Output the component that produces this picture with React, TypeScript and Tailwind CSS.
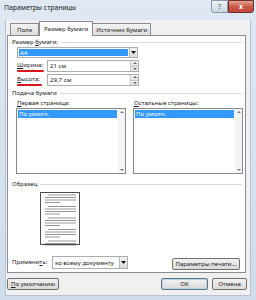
import React from "react";

const U = ({ c }: { c: string }) => <span className="underline underline-offset-1">{c}</span>;

function SectionHeader({ children }: { children: React.ReactNode }) {
  return (
    <div className="flex items-center h-[8px] pl-[4px] pr-[3px]">
      <span className="leading-[8px] whitespace-nowrap">{children}</span>
      <div className="flex-1 h-px bg-[#dcdcdc] ml-[3px]" />
    </div>
  );
}

function DropArrow() {
  return (
    <div className="w-[8px] h-full border-l border-[#b5b5b5] bg-gradient-to-b from-[#f4f4f4] to-[#dcdcdc] flex items-center justify-center">
      <svg width="5" height="3" viewBox="0 0 5 3"><path d="M0 0H5L2.5 3Z" fill="#111" /></svg>
    </div>
  );
}

function Spin() {
  return (
    <div className="w-[8px] h-full flex flex-col border-l border-[#c8c8c8]">
      <div className="flex-1 bg-gradient-to-b from-[#f6f6f6] to-[#e2e2e2] border-b border-[#c8c8c8] flex items-center justify-center">
        <svg width="4" height="2" viewBox="0 0 4 2"><path d="M0 2H4L2 0Z" fill="#666" /></svg>
      </div>
      <div className="flex-1 bg-gradient-to-b from-[#f6f6f6] to-[#e2e2e2] flex items-center justify-center">
        <svg width="4" height="2" viewBox="0 0 4 2"><path d="M0 0H4L2 2Z" fill="#666" /></svg>
      </div>
    </div>
  );
}

function SizeRow({ label, ul, value }: { label: React.ReactNode; ul: number; value: string }) {
  return (
    <div className="flex h-[12px] pl-[9px]">
      <div className="w-[30px] flex flex-col">
        <span className="leading-[10px] h-[11px] whitespace-nowrap">{label}</span>
        <div className="h-[2px] bg-[#d81818] rounded-full" style={{ width: ul }} />
      </div>
      <div className="w-[92px] h-[12px] flex border border-[#abadb3] bg-white">
        <span className="flex-1 pl-[2px] leading-[10px]">{value}</span>
        <Spin />
      </div>
    </div>
  );
}

function ListBox({ item }: { item: string }) {
  return (
    <div className="w-[110px] h-[66px] border border-[#828790] bg-white flex">
      <div className="flex-1 p-px">
        <div className="bg-[#3399ff] text-white h-[8px] leading-[8px] pl-px">{item}</div>
      </div>
      <div className="w-[7px] bg-[#f4f4f4] flex flex-col justify-between items-center py-[2px]">
        <svg width="4" height="2" viewBox="0 0 4 2"><path d="M0 2H4L2 0Z" fill="#777" /></svg>
        <svg width="4" height="2" viewBox="0 0 4 2"><path d="M0 0H4L2 2Z" fill="#777" /></svg>
      </div>
    </div>
  );
}

function Preview() {
  const lines: React.ReactNode[] = [];
  let y = 3;
  for (let p = 0; p < 5; p++) {
    const ys = [y, y + 2.5, y + 5, y + 7.5];
    lines.push(<line key={`a${p}`} x1={8} x2={36} y1={ys[0]} y2={ys[0]} />);
    lines.push(<line key={`b${p}`} x1={5} x2={36} y1={ys[1]} y2={ys[1]} />);
    lines.push(<line key={`c${p}`} x1={5} x2={36} y1={ys[2]} y2={ys[2]} />);
    if (ys[3] < 50) lines.push(<line key={`d${p}`} x1={5} x2={20} y1={ys[3]} y2={ys[3]} />);
    y += 11.5;
  }
  return (
    <svg width="41" height="54" viewBox="0 0 41 54">
      <rect x="0.5" y="0.5" width="39" height="52" fill="#fff" stroke="#4d4d4d" />
      <g stroke="#8a8a8a" strokeWidth="0.9">{lines}</g>
    </svg>
  );
}

function Btn({ children, w, extra = "" }: { children: React.ReactNode; w: string; extra?: string }) {
  return (
    <div className={`${w} h-[12px] rounded-[2px] border border-[#707070] bg-gradient-to-b from-[#f2f2f2] to-[#d9d9d9] flex items-center justify-center leading-[10px] whitespace-nowrap ${extra}`}>
      {children}
    </div>
  );
}

export default function App() {
  return (
    <div className="w-[256px] h-[300px] overflow-hidden bg-gradient-to-b from-[#dfe8f3] to-[#cfdcea] flex flex-col text-[6.1px] text-[#1a1a1a] font-['Noto_Sans',sans-serif]">
      {/* Title bar */}
      <div className="h-[20px] flex items-start shrink-0">
        <span className="pl-[4px] pt-[4px] leading-[8px] text-[#1a1a1a] text-[6.8px]">Параметры страницы</span>
        <div className="ml-auto mr-[2px] flex">
          <div className="w-[17px] h-[13px] border border-[#8a97a8] rounded-bl-[3px] bg-gradient-to-b from-[#eef3f8] to-[#ccd7e3] flex items-center justify-center text-[7px] text-[#555] leading-none">?</div>
          <div className="w-[26px] h-[13px] border border-[#6d2f2f] rounded-br-[3px] bg-gradient-to-b from-[#e8a394] via-[#c75a4a] to-[#c5463a] flex items-center justify-center text-white text-[7px] font-bold leading-none">x</div>
        </div>
      </div>
      {/* Client */}
      <div className="h-[276px] mx-[5px] bg-[#f0f0f0] flex flex-col border border-[#b4c2d2] border-t-0 shrink-0">
        {/* Tabs */}
        <div className="flex h-[15px] pl-[4px] items-end">
          <div className="h-[12px] px-[6px] border border-b-0 border-[#898c95] bg-gradient-to-b from-[#f3f3f3] to-[#dedede] leading-[11px]">Поле</div>
          <div className="h-[15px] px-[4px] border border-b-0 border-[#898c95] bg-white leading-[13px] -mb-px relative z-10">Размер бумаги</div>
          <div className="h-[12px] px-[3px] border border-b-0 border-l-0 border-[#898c95] bg-gradient-to-b from-[#f3f3f3] to-[#dedede] leading-[11px]">Источник бумаги</div>
        </div>
        {/* Panel */}
        <div className="ml-[1px] mr-[4px] h-[238px] border border-[#898c95] bg-white flex flex-col">
          <div className="mt-[2px]"><SectionHeader>Размер <U c="б" />умаги:</SectionHeader></div>
          <div className="mt-[1px] pl-[9px]">
            <div className="w-[121px] h-[11px] border border-[#abadb3] flex bg-white">
              <div className="flex-1 m-px bg-[#3399ff] text-white leading-[7px] pl-px">A4</div>
              <DropArrow />
            </div>
          </div>
          <div className="mt-[2px]"><SizeRow label={<><U c="Ш" />ирина:</>} ul={27} value="21 см" /></div>
          <div className="mt-[2px]"><SizeRow label={<><U c="В" />ысота:</>} ul={25} value="29,7 см" /></div>
          <div className="mt-[3px]"><SectionHeader>Подача бумаги</SectionHeader></div>
          <div className="mt-[2px] flex h-[8px] pl-[9px] leading-[8px]">
            <span className="w-[117px]"><U c="П" />ервая страница:</span>
            <span><U c="О" />стальные страницы:</span>
          </div>
          <div className="mt-[1px] flex pl-[8px] gap-[7px]">
            <ListBox item="По умолч." />
            <ListBox item="По умолч." />
          </div>
          <div className="mt-[6px]"><SectionHeader>Образец</SectionHeader></div>
          <div className="mt-[4px] pl-[32px] h-[54px]"><Preview /></div>
          <div className="mt-[9px] flex items-center h-[14px] pl-[4px] pr-[5px]">
            <span className="w-[40px] leading-[8px]">Примени<U c="т" />ь:</span>
            <div className="w-[76px] h-[13px] border border-[#abadb3] flex bg-white">
              <span className="flex-1 pl-[2px] leading-[11px]">ко всему документу</span>
              <DropArrow />
            </div>
            <div className="ml-auto mt-[3px]"><Btn w="w-[68px]">Параметры печати...</Btn></div>
          </div>
        </div>
        {/* Bottom buttons */}
        <div className="mt-[5px] flex pl-[1px] pr-[3px]">
          <Btn w="w-[52px]"><U c="П" />о умолчанию</Btn>
          <div className="ml-auto flex gap-[4px]">
            <Btn w="w-[47px]" extra="border-[#3c7fb1] shadow-[inset_0_0_0_1px_#a9d9f5]">OK</Btn>
            <Btn w="w-[35px]">Отмена</Btn>
          </div>
        </div>
      </div>
    </div>
  );
}
